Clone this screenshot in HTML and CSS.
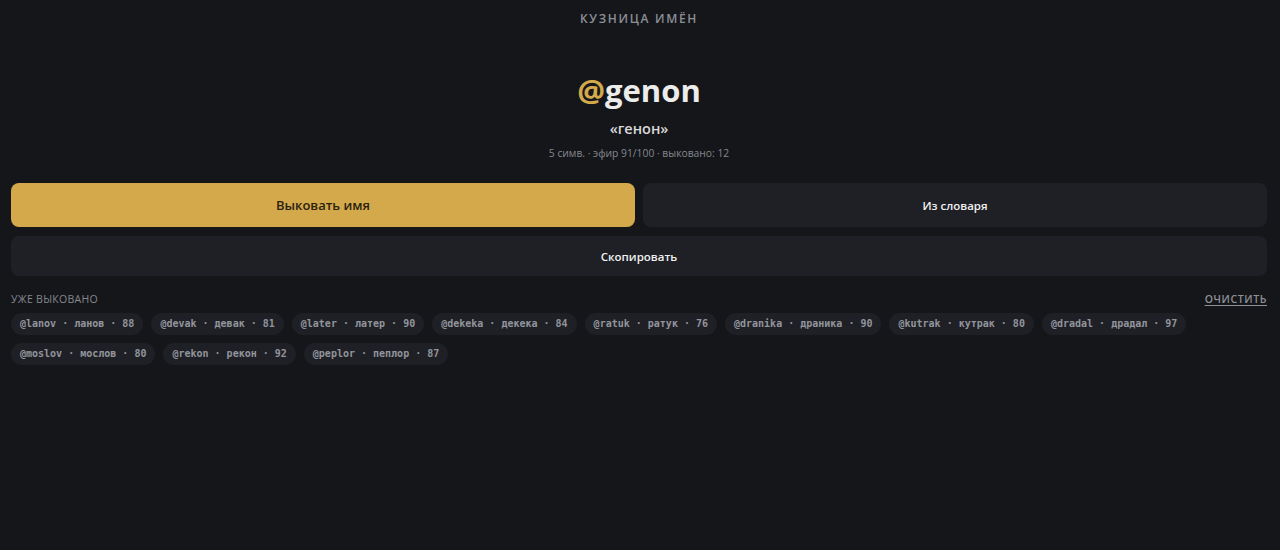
FILE: index.html
```html
<!DOCTYPE html>
<html lang="ru">
<head>
<meta charset="utf-8">
<title>Кузница имён</title>
<link rel="stylesheet" href="styles.css">
</head>
<body>
<div class="app">
  <header class="brand">КУЗНИЦА ИМЁН</header>

  <section class="hero">
    <div class="handle"><span class="at">@</span>genon</div>
    <div class="reading">«генон»</div>
    <div class="meta">5 симв. · эфир 91/100 · выковано: 12</div>
  </section>

  <div class="actions">
    <button class="btn btn-primary">Выковать имя</button>
    <button class="btn">Из словаря</button>
    <button class="btn btn-wide">Скопировать</button>
  </div>

  <div class="history-head">
    <span class="history-title">Уже выковано</span>
    <a class="clear" href="#">ОЧИСТИТЬ</a>
  </div>

  <ul class="chips">
    <li class="chip">@lanov · ланов · 88</li>
    <li class="chip">@devak · девак · 81</li>
    <li class="chip">@later · латер · 90</li>
    <li class="chip">@dekeka · декека · 84</li>
    <li class="chip">@ratuk · ратук · 76</li>
    <li class="chip">@dranika · драника · 90</li>
    <li class="chip">@kutrak · кутрак · 80</li>
    <li class="chip">@dradal · драдал · 97</li>
    <li class="chip">@moslov · мослов · 80</li>
    <li class="chip">@rekon · рекон · 92</li>
    <li class="chip">@peplor · пеплор · 87</li>
  </ul>
</div>
</body>
</html>
```

FILE: styles.css
```css
* {
  box-sizing: border-box;
}

html,
body {
  margin: 0;
  height: 100%;
  background: #15161a;
}

body {
  font-family: "Open Sans", "Noto Sans", sans-serif;
  color: #e6e6e6;
}

.app {
  width: 1256px;
  margin-left: 11px;
  padding-top: 11px;
}

.brand {
  text-align: center;
  font-size: 12px;
  font-weight: 600;
  letter-spacing: 1.7px;
  color: #8c8f97;
  line-height: 16px;
}

.hero {
  display: flex;
  flex-direction: column;
  align-items: center;
  margin-top: 41px;
}

.handle {
  font-size: 31px;
  font-weight: 700;
  line-height: 44px;
  color: #ececea;
}

.at {
  color: #d4a94c;
}

.reading {
  margin-top: 7px;
  font-size: 14.5px;
  font-weight: 600;
  line-height: 20px;
  color: #d9d9d9;
}

.meta {
  margin-top: 7px;
  font-size: 10.3px;
  line-height: 14px;
  color: #85878e;
}

.actions {
  display: grid;
  grid-template-columns: 1fr 1fr;
  gap: 9px 8px;
  margin-top: 23px;
}

.btn {
  height: 44px;
  border: 0;
  border-radius: 8px;
  background: #1f2026;
  color: #f0f0f0;
  font-family: inherit;
  font-size: 11.5px;
  font-weight: 600;
}

.btn-primary {
  background: #d4a94c;
  color: #2a2210;
  font-size: 13px;
}

.btn-wide {
  grid-column: 1 / -1;
  height: 40px;
}

.history-head {
  display: flex;
  justify-content: space-between;
  align-items: center;
  margin-top: 16px;
  line-height: 14px;
}

.history-title {
  font-size: 10.5px;
  text-transform: uppercase;
  letter-spacing: 0.3px;
  color: #85878e;
}

.clear {
  font-size: 10.5px;
  font-weight: 600;
  letter-spacing: 0.6px;
  color: #8e9098;
  text-decoration: underline;
  text-underline-offset: 2px;
}

.chips {
  list-style: none;
  margin: 7px 0 0;
  padding: 0;
  display: flex;
  flex-wrap: wrap;
  gap: 8px;
}

.chip {
  height: 22px;
  padding: 0 9px;
  border-radius: 11px;
  background: #1f2026;
  font-family: "DejaVu Sans Mono", monospace;
  font-size: 10px;
  font-weight: 700;
  line-height: 22px;
  color: #92949b;
  white-space: nowrap;
}
```
